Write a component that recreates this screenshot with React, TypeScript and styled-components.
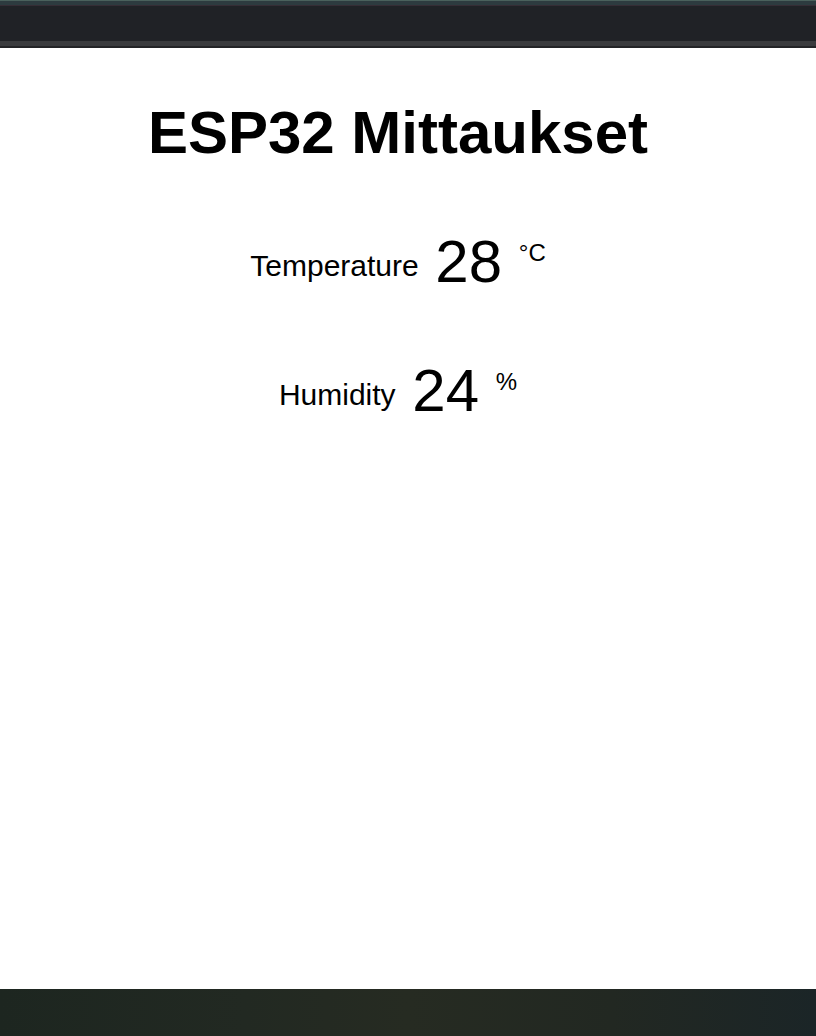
import React from "react";
import styled, { createGlobalStyle } from "styled-components";

const Global = createGlobalStyle`
  html, body { margin: 0; padding: 0; background: #ffffff; }
  body { font-family: "Liberation Sans", Arial, sans-serif; }
`;

const Shell = styled.div`
  display: flex;
  flex-direction: column;
  width: 816px;
  height: 1036px;
  overflow: hidden;
`;

const TopBar = styled.div`
  height: 48px;
  flex: none;
  background: linear-gradient(
    to bottom,
    #4a615c 0px,
    #4a615c 1px,
    #2d3b3f 1px,
    #2d3b3f 5px,
    #352d35 5px,
    #352d35 6px,
    #202226 6px,
    #202226 41px,
    #3a3b3e 41px,
    #3a3b3e 46px,
    #232427 46px,
    #232427 48px
  );
`;

const Page = styled.main`
  flex: 1;
  background: #ffffff;
  padding: 0 30px 0 10px;
  text-align: center;
  color: #000;
  font-family: "Liberation Sans", Arial, sans-serif;
  display: flow-root;
`;

const Title = styled.h2`
  font-size: 60px;
  font-weight: bold;
  margin: 50px 0 60px;
`;

const Reading = styled.p`
  font-size: 60px;
  margin: 60px 0;
`;

const Icon = styled.i`
  font-style: normal;
`;

const Label = styled.span`
  font-size: 30px;
  vertical-align: middle;
  padding-bottom: 19px;
`;

const Units = styled.sup`
  font-size: 24px;
`;

const BottomBar = styled.div`
  height: 47px;
  flex: none;
  background: linear-gradient(
    to right,
    #1d2620 0%,
    #222922 30%,
    #262b22 50%,
    #222822 75%,
    #1b2527 100%
  );
`;

const readings = [
  { label: "Temperature", value: "28", unit: "°C" },
  { label: "Humidity", value: "24", unit: "%" },
];

export default function App() {
  return (
    <>
      <Global />
      <Shell>
        <TopBar />
        <Page>
          <Title>ESP32 Mittaukset</Title>
          {readings.map((r) => (
            <Reading key={r.label}>
              <Icon />{" "}
              <Label>{r.label}</Label>{" "}
              <span>{r.value}</span>{" "}
              <Units>{r.unit}</Units>
            </Reading>
          ))}
        </Page>
        <BottomBar />
      </Shell>
    </>
  );
}
